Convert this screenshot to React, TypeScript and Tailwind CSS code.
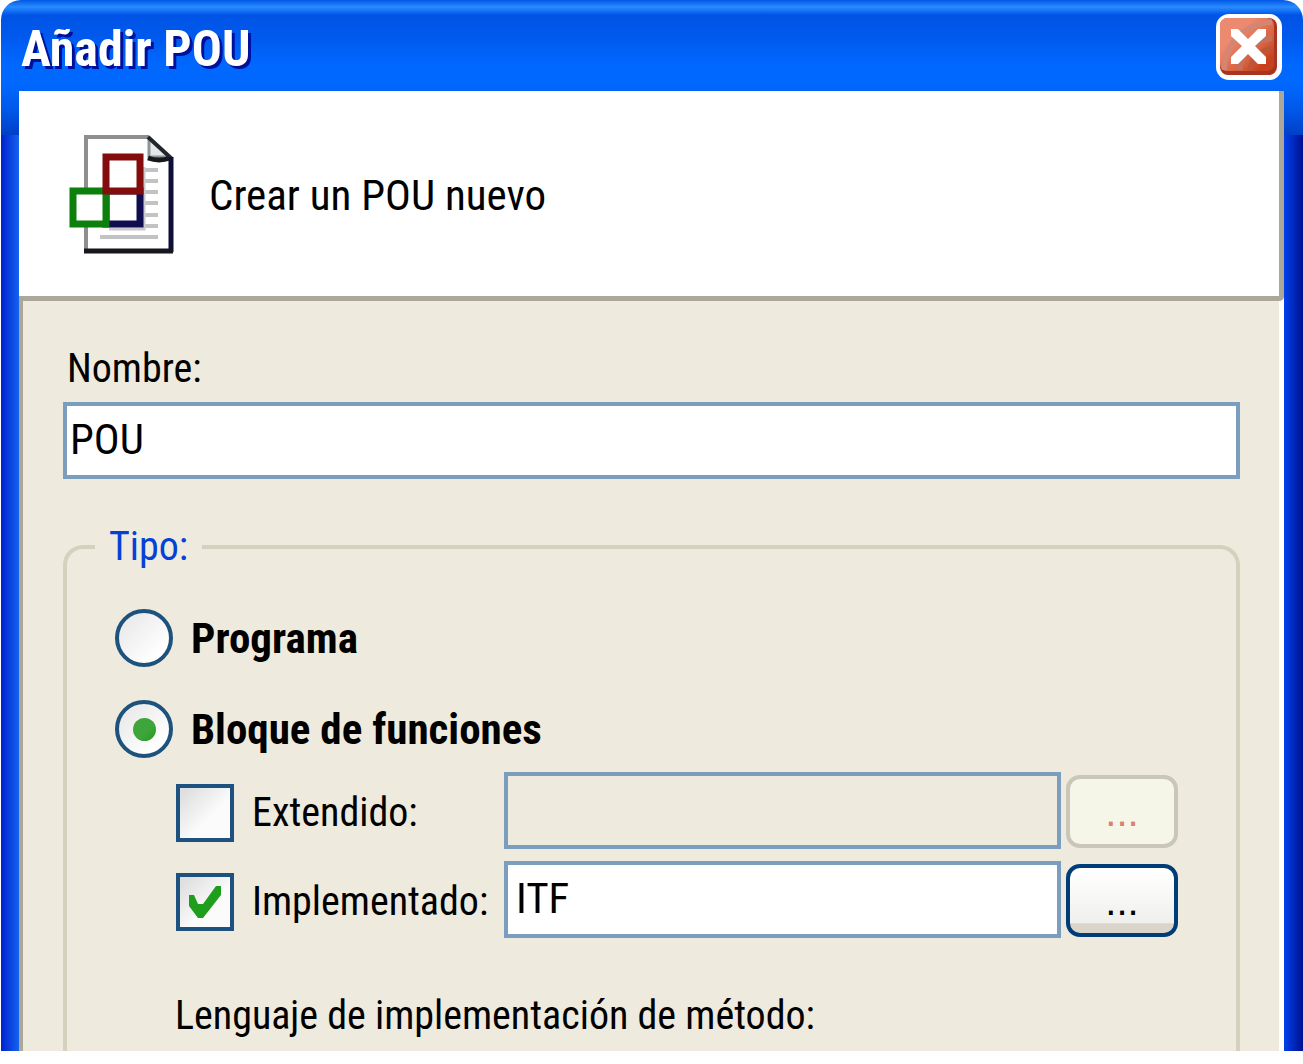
import { useState } from "react";
import type { ReactNode } from "react";

function PouIcon() {
  return (
    <svg viewBox="0 0 106 122" className="h-[122px] w-[106px] shrink-0" aria-hidden="true">
      <path d="M16 3H79L103 26V118H16Z" fill="#fff" />
      <path d="M17 118V3H80" fill="none" stroke="#8f8f8f" strokeWidth="4" />
      <path d="M80 4V23H101" fill="#e4e6e8" stroke="#8e949a" strokeWidth="3" />
      <path d="M79 24Q90 28 101 24" fill="none" stroke="#15181c" strokeWidth="5" />
      <path d="M79 3L103 25" fill="none" stroke="#22262a" strokeWidth="4" />
      <path d="M102 23V118" fill="none" stroke="#0d0f38" strokeWidth="5" />
      <path d="M15 117H104" fill="none" stroke="#15161e" strokeWidth="5" />
      <g stroke="#c2c4c4" strokeWidth="4">
        <path d="M75 36H89M75 47H89M75 58H89M75 69H89M75 81H89M75 92H89M31 103H89" />
      </g>
      <path d="M75 33V95H40" fill="none" stroke="#c9c9cf" strokeWidth="3" />
      <rect x="37" y="57" width="34" height="33" fill="#fff" stroke="#0f0c50" strokeWidth="7" />
      <rect x="4" y="57" width="33" height="33" fill="#fff" stroke="#0c7f0c" strokeWidth="7" />
      <rect x="37" y="23" width="34" height="34" fill="#fff" stroke="#840c0c" strokeWidth="7" />
    </svg>
  );
}

function CloseButton() {
  return (
    <button type="button" aria-label="Cerrar" className="size-[66px] shrink-0">
      <svg viewBox="0 0 66 66" className="size-full" aria-hidden="true">
        <defs>
          <linearGradient id="close-face" x1="0" y1="0" x2="1" y2="1">
            <stop offset="0.3" stopColor="#ec8a70" />
            <stop offset="0.65" stopColor="#d9603f" />
            <stop offset="0.85" stopColor="#c6421c" />
          </linearGradient>
        </defs>
        <rect width="66" height="66" rx="13" fill="#fff" />
        <rect x="4" y="4" width="57" height="57" rx="8" fill="#a8351f" />
        <rect x="4" y="4" width="54" height="53" rx="7" fill="url(#close-face)" />
        <path d="M8 56Q12 12 56 8" fill="none" stroke="#d48674" strokeWidth="5" />
        <path d="M23 56Q28 29 56 24" fill="none" stroke="#c4705a" strokeWidth="6" />
        <path d="M34 56Q37 38 56 34" fill="none" stroke="#bd5638" strokeWidth="5" />
        <path d="M15 15H22L32 25L42 15H50V22L39 32L50 43V50H42L32 40L22 50H15V43L26 32L15 22Z" fill="#fff" />
      </svg>
    </button>
  );
}

type RadioProps = {
  label: string;
  checked: boolean;
  onSelect: () => void;
};

function RadioOption({ label, checked, onSelect }: RadioProps) {
  return (
    <label className="flex h-[58px] items-center gap-[18px] text-[43px] font-bold">
      <span className="grid shrink-0 place-items-center">
        <input
          type="radio"
          name="tipo"
          checked={checked}
          onChange={onSelect}
          className="peer col-start-1 row-start-1 size-[58px] appearance-none rounded-full border-4 border-[#1c527c] bg-linear-to-br from-[#ececec] from-20% to-white to-80%"
        />
        <span className="pointer-events-none col-start-1 row-start-1 hidden size-[23px] rounded-full bg-linear-to-br from-[#3da53a] from-60% to-[#1c9a1c] peer-checked:block" />
      </span>
      {label}
    </label>
  );
}

type ReferenceRowProps = {
  label: string;
  value: string;
  enabled: boolean;
  onToggle: (enabled: boolean) => void;
  onChange: (value: string) => void;
};

function ReferenceRow({ label, value, enabled, onToggle, onChange }: ReferenceRowProps) {
  return (
    <div className="flex h-[77px] items-end">
      <label className="flex h-full w-[328px] shrink-0 items-center gap-[18px] pt-[5px]">
        <span className="grid shrink-0 place-items-center">
          <input
            type="checkbox"
            checked={enabled}
            onChange={(e) => onToggle(e.target.checked)}
            className="peer col-start-1 row-start-1 size-[58px] appearance-none border-4 border-[#1c5180] bg-linear-to-br from-[#e0e0e1] from-10% to-[#fbfbfb] to-60%"
          />
          <svg
            viewBox="0 0 32 32"
            className="pointer-events-none col-start-1 row-start-1 hidden size-8 peer-checked:block"
            aria-hidden="true"
          >
            <path d="M0 9H5L9 18H14L27 0H32V9L14 32H9L0 20Z" fill="#1f9e1e" />
          </svg>
        </span>
        {label}
      </label>
      <input
        type="text"
        aria-label={label}
        value={value}
        disabled={!enabled}
        onChange={(e) => onChange(e.target.value)}
        className="h-[77px] min-w-0 flex-1 border-4 border-[#7b9ebf] bg-white px-2 pb-1 text-[43px] disabled:bg-[#eeeade]"
      />
      <button
        type="button"
        disabled={!enabled}
        aria-label={`Examinar ${label}`}
        className="mb-px ml-[5px] h-[73px] w-28 shrink-0 rounded-[14px] border-4 border-[#003d78] bg-[linear-gradient(#fff,#f8f9f7_40%,#eff0ec_84%,#dbd4cb_86%)] font-['Liberation_Sans',sans-serif] disabled:border-[#cac7ba] disabled:bg-[#f5f5e8] disabled:bg-none disabled:text-[#d9806f]"
      >
        ...
      </button>
    </div>
  );
}

function Frame({ title, children }: { title: string; children: ReactNode }) {
  return (
    <main className="ml-px rounded-t-[20px] pr-[19px] pl-[18px] [background:linear-gradient(#0058e6,#2a8bff_7px,#0a62f0_13px,#0054e5_15px,#0058ec_35px,#0068ff_65px,#0068ff_84px,#0058e8_110px,#003fc8_135px)_top/100%_135px_no-repeat,linear-gradient(90deg,#0020d0,#1464ee)_left/18px_100%_no-repeat,linear-gradient(90deg,#0042ec,#001090)_right/19px_100%_no-repeat]">
      <header className="flex h-[91px] items-center justify-between px-[2px] pt-[2px]">
        <h1 className="pt-1 text-[50px] leading-none font-bold text-white [text-shadow:3px_3px_0_#00109c]">
          {title}
        </h1>
        <CloseButton />
      </header>
      {children}
    </main>
  );
}

export default function App() {
  const [name, setName] = useState("POU");
  const [kind, setKind] = useState("bloque");
  const [extendsOn, setExtendsOn] = useState(false);
  const [extendsName, setExtendsName] = useState("");
  const [implementsOn, setImplementsOn] = useState(true);
  const [implementsName, setImplementsName] = useState("ITF");

  return (
    <div className="bg-white pb-[13px] font-['Roboto_Condensed','Arial_Narrow','Liberation_Sans',sans-serif] text-[40px] leading-[48px] text-black">
      <Frame title="Añadir POU">
        <section className="flex h-[210px] items-center gap-[34px] rounded-br-[5px] border-r-[5px] border-b-[5px] border-[#aca899] bg-white pt-[2px] pl-[50px]">
          <PouIcon />
          <p className="text-[43px]">Crear un POU nuevo</p>
        </section>

        <form className="border-r-[5px] border-l-4 border-r-white border-l-[#aca899] bg-[#eeeade] pt-11 pr-[39px] pl-10">
          <label htmlFor="pou-name" className="block pb-[9px] pl-1">
            Nombre:
          </label>
          <input
            id="pou-name"
            type="text"
            value={name}
            onChange={(e) => setName(e.target.value)}
            className="block h-[77px] w-full border-4 border-[#7b9ebf] bg-white px-[3px] pb-1 text-[43px]"
          />

          <fieldset className="mt-11 min-w-0 rounded-t-[20px] border-4 border-b-0 border-[#d4d2be] pr-[58px] pb-[11px] pl-12">
            <legend className="-ml-5 px-[14px] text-[#0540d8]">Tipo:</legend>
            <div className="flex flex-col gap-[33px] pt-[38px]">
              <RadioOption label="Programa" checked={kind === "programa"} onSelect={() => setKind("programa")} />
              <RadioOption
                label="Bloque de funciones"
                checked={kind === "bloque"}
                onSelect={() => setKind("bloque")}
              />
            </div>
            <div className="flex flex-col gap-3 pt-[14px] pl-[61px]">
              <ReferenceRow
                label="Extendido:"
                value={extendsName}
                enabled={extendsOn}
                onToggle={setExtendsOn}
                onChange={setExtendsName}
              />
              <ReferenceRow
                label="Implementado:"
                value={implementsName}
                enabled={implementsOn}
                onToggle={setImplementsOn}
                onChange={setImplementsName}
              />
            </div>
            <p className="pt-[54px] pl-[60px]">Lenguaje de implementación de método:</p>
          </fieldset>
        </form>
      </Frame>
    </div>
  );
}
